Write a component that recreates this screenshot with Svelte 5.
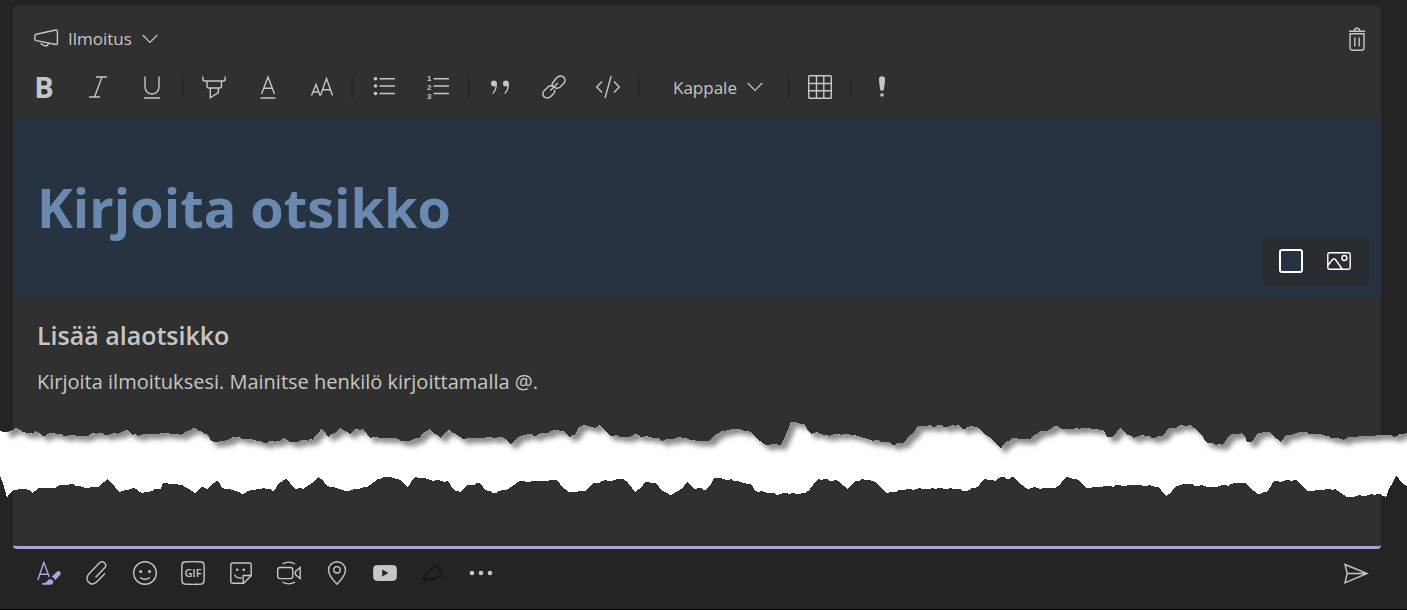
<script lang="ts">
  let postType = $state("announcement");
  let textStyle = $state("paragraph");
  let headline = $state("");
  let subhead = $state("");
  let message = $state("");

  type Point = [number, number];

  // upper and lower edge of the paper tear, left to right
  const upperEdge: Point[] = [
    [0, 431], [7, 432], [10, 431], [16, 428], [23, 432], [33, 434], [35, 431], [42, 436], [53, 433], [67, 436],
    [88, 436], [93, 433], [108, 435], [120, 433], [127, 430], [132, 435], [150, 434], [167, 433], [180, 435],
    [188, 431], [193, 428], [199, 431], [208, 435], [211, 441], [218, 442], [230, 439], [233, 437], [247, 439],
    [260, 441], [267, 443], [272, 441], [280, 441], [283, 438], [290, 442], [298, 442], [302, 440], [313, 440],
    [316, 435], [321, 429], [328, 437], [335, 433], [340, 428], [350, 435], [356, 429], [363, 429], [370, 438],
    [388, 438], [407, 441], [420, 438], [423, 433], [430, 429], [440, 438], [449, 430], [457, 435], [462, 439],
    [475, 438], [502, 437], [511, 444], [518, 437], [528, 434], [533, 436], [545, 433], [557, 430], [562, 431],
    [570, 437], [575, 435], [579, 427], [584, 425], [594, 428], [599, 425], [605, 431], [610, 436], [629, 437],
    [635, 434], [640, 437], [658, 438], [662, 441], [667, 439], [685, 438], [690, 440], [709, 441], [715, 435],
    [722, 431], [735, 429], [747, 431], [755, 437], [763, 444], [781, 445], [785, 437], [791, 422], [803, 424],
    [811, 434], [817, 432], [823, 435], [847, 434], [857, 436], [867, 439], [887, 442], [895, 445], [903, 443],
    [911, 435], [918, 426], [950, 426], [958, 425], [962, 429], [968, 427], [978, 428], [983, 433], [995, 442],
    [1001, 449], [1007, 441], [1015, 438], [1030, 440], [1040, 431], [1047, 431], [1054, 426], [1065, 429],
    [1085, 428], [1102, 430], [1107, 437], [1113, 437], [1120, 428], [1128, 435], [1133, 438], [1142, 435],
    [1152, 438], [1162, 436], [1170, 428], [1190, 425], [1197, 431], [1208, 443], [1222, 445], [1230, 435],
    [1242, 433], [1247, 442], [1253, 441], [1258, 433], [1270, 432], [1273, 436], [1280, 442], [1288, 435],
    [1303, 432], [1322, 435], [1343, 440], [1348, 437], [1363, 436], [1383, 435], [1397, 436], [1407, 433],
  ];
  const lowerEdge: Point[] = [
    [0, 476], [3, 483], [7, 498], [13, 490], [25, 489], [32, 493], [38, 488], [55, 488], [60, 485], [70, 484],
    [88, 488], [98, 487], [107, 479], [115, 487], [119, 492], [133, 488], [142, 493], [161, 489], [163, 483],
    [182, 485], [195, 493], [202, 487], [207, 489], [217, 480], [222, 488], [232, 490], [242, 494], [248, 491],
    [263, 488], [273, 491], [278, 484], [286, 479], [293, 487], [303, 489], [312, 483], [318, 477], [327, 486],
    [345, 491], [367, 487], [377, 479], [390, 477], [400, 480], [407, 487], [415, 477], [430, 480], [447, 481],
    [455, 491], [460, 492], [467, 485], [480, 483], [485, 490], [493, 493], [508, 489], [517, 482], [553, 480],
    [557, 480], [562, 487], [568, 492], [585, 491], [593, 483], [623, 479], [628, 483], [635, 492], [642, 487],
    [645, 482], [656, 483], [662, 491], [670, 495], [678, 491], [687, 482], [695, 489], [707, 489], [714, 478],
    [737, 481], [750, 484], [755, 491], [780, 494], [805, 493], [813, 485], [818, 479], [838, 481], [847, 489],
    [853, 483], [862, 479], [875, 482], [887, 493], [907, 489], [950, 488], [963, 491], [977, 487], [985, 479],
    [995, 481], [998, 478], [1015, 478], [1025, 488], [1055, 488], [1067, 477], [1078, 480], [1087, 488],
    [1110, 486], [1140, 485], [1158, 487], [1166, 496], [1177, 486], [1183, 484], [1213, 487], [1240, 483],
    [1247, 484], [1257, 494], [1267, 492], [1274, 481], [1297, 480], [1307, 491], [1335, 489], [1347, 497],
    [1380, 494], [1386, 497], [1396, 476], [1402, 483], [1407, 487],
  ];

  // break long runs into short steps so the paper looks fibrous
  function roughen(edge: Point[]): Point[] {
    const out: Point[] = [];
    for (let i = 0; i < edge.length - 1; i++) {
      const [x1, y1] = edge[i];
      const [x2, y2] = edge[i + 1];
      const steps = Math.max(1, Math.round((x2 - x1) / 3));
      out.push([x1, y1]);
      for (let s = 1; s < steps; s++) {
        const x = x1 + ((x2 - x1) * s) / steps;
        const y = y1 + ((y2 - y1) * s) / steps;
        out.push([Math.round(x), Math.round(y + (Math.sin(x * 1.7) + Math.sin(x * 0.6)) * 0.5)]);
      }
    }
    out.push(edge[edge.length - 1]);
    return out;
  }

  const upper = roughen(upperEdge);
  const lower = roughen(lowerEdge);
  const paper = [...upper, ...lower.toReversed()].join(" ");
  const shade = [[4, 400], ...upper.slice(1), [1440, 433], [1440, 400]].join(" ");
</script>

{#snippet chevron()}
  <svg class="chevron" viewBox="0 0 16 10" aria-hidden="true"><path d="M.8 1 8 8.4 15.2 1" /></svg>
{/snippet}

<main class="compose">
  <section class="panel">
    <header class="post-type">
      <label class="dropdown">
        <svg class="icon" viewBox="0 0 24 24" aria-hidden="true">
          <path d="M2.3 7.3 21.8 3q1.6-.3 1.6 1.3v11.9q0 1.6-1.6 1.3L2.3 13.6Q.8 13.2.8 12V8.9Q.8 7.7 2.3 7.3ZM7.2 14.8v1.4q0 1 1 1.4l3 1.2q2 .6 2.8-1.2l.4-1.2" />
        </svg>
        <select bind:value={postType} aria-label="Viestin tyyppi">
          <option value="announcement">Ilmoitus</option>
        </select>
        {@render chevron()}
      </label>
      <button aria-label="Poista">
        <svg class="icon" viewBox="0 0 24 24">
          <path d="M4 4.2h16M9.3 4q0-2.8 2.7-2.8T14.7 4M5 6.8h14v14q0 2.4-2.4 2.4H7.4Q5 23.2 5 20.8ZM9.8 10.5v9M14.2 10.5v9" />
        </svg>
      </button>
    </header>

    <div class="toolbar">
      <button class="bold" aria-label="Lihavointi">B</button>
      <button aria-label="Kursivointi">
        <svg class="icon" viewBox="0 0 24 24"><path d="M10 2h11M3 22h11M16 2 8.5 22" /></svg>
      </button>
      <button aria-label="Alleviivaus">
        <svg class="icon" viewBox="0 0 24 24"><path d="M5 1.5v10.5a7 7 0 0 0 14 0V1.5M4 23h16" /></svg>
      </button>
      <span class="divider"></span>
      <button aria-label="Korostus">
        <svg class="icon" viewBox="0 0 24 24">
          <path d="M.8 1.5v2.5q0 2 2 2h18.4q2 0 2-2V1.5M5 6v5q0 2 2 2h10.5q2 0 2-2V6M8.3 13v9.8l8-5.3V13" />
        </svg>
      </button>
      <button aria-label="Fontin väri">
        <svg class="icon" viewBox="0 0 24 24"><path d="M5.5 19 12 2l6.5 17M8 13.2h8M4.5 23h15" /></svg>
      </button>
      <button aria-label="Fonttikoko">
        <svg class="icon" viewBox="0 0 24 24"><path d="M1.5 20.5 6 9.5l4 11M3 17h5.5M10.5 20.5 16.5 3.5l6 17M12.7 14.8h7.8" /></svg>
      </button>
      <span class="divider"></span>
      <button aria-label="Luettelomerkit">
        <svg class="icon" viewBox="0 0 24 24">
          <path d="M7.5 3.7h15.5M7.5 11h15.5M7.5 18.5h15.5" />
          <g class="solid"><circle cx="3.5" cy="3.7" r="1.8" /><circle cx="3.5" cy="11" r="1.8" /><circle cx="3.5" cy="18.5" r="1.8" /></g>
        </svg>
      </button>
      <button aria-label="Numeroitu luettelo">
        <svg class="icon" viewBox="0 0 24 24">
          <path d="M7.5 3.7h15.5M7.5 11h15.5M7.5 18.5h15.5" />
          <g class="digits"><text x="1" y="6">1</text><text x="1" y="15">2</text><text x="1" y="24">3</text></g>
        </svg>
      </button>
      <span class="divider"></span>
      <button aria-label="Lainaus">
        <svg class="icon" viewBox="0 0 24 24">
          <path class="solid" d="M6 5.5a3 3 0 1 0 0 6q1 0 1.6-.4Q7.2 15 4.3 18.3l.8.8Q9 15 9 9 9 5.5 6 5.5ZM18 5.5a3 3 0 1 0 0 6q1 0 1.6-.4-.4 3.9-3.3 7.2l.8.8Q21 15 21 9q0-3.5-3-3.5Z" />
        </svg>
      </button>
      <button aria-label="Linkki">
        <svg class="icon" viewBox="0 0 24 24">
          <path d="M8.5 15.5 15.8 8M10 8.8l4.3-5.6Q16.5.7 19 1q4 .8 4 4.5 0 1.7-1.4 3.1l-3.7 3.7q-2.5 2-5.5-.1-2.600-1.600-2.400-3.400M12.7 14.6q.5 2.2-1 3.9l-3 3q-2 2-4.6 1.4Q1 22 .8 19q0-1.8 1.4-3.2l4-4q2.3-1.9 4.8-.3" />
        </svg>
      </button>
      <button aria-label="Koodi">
        <svg class="icon" viewBox="0 0 24 24"><path d="M6 6.5.8 12 6 17.5M18 6.5l5.2 5.5-5.2 5.5M15.2 1 9 23" /></svg>
      </button>
      <span class="divider"></span>
      <label class="dropdown text-style">
        <select bind:value={textStyle} aria-label="Tekstityyli">
          <option value="paragraph">Kappale</option>
        </select>
        {@render chevron()}
      </label>
      <span class="divider"></span>
      <button aria-label="Taulukko">
        <svg class="icon" viewBox="0 0 24 24"><path d="M1.5.7h21q.8 0 .8.8v21q0 .8-.8.8h-21q-.8 0-.8-.8v-21q0-.8.8-.8ZM.7 8.5h22.6M.7 15.8h22.6M8.5.7v22.6M15.8.7v22.6" /></svg>
      </button>
      <span class="divider"></span>
      <button aria-label="Tärkeä">
        <svg class="icon" viewBox="0 0 24 24">
          <path class="solid" d="M9 4q0-2.800 3-2.800T15 4q0 4-1.400 11.500h-3.200Q9 8 9 4Z" />
          <circle class="solid" cx="12" cy="20" r="1.8" />
        </svg>
      </button>
    </div>

    <div class="banner">
      <input class="headline" bind:value={headline} placeholder="Kirjoita otsikko" aria-label="Otsikko" />
      <div class="banner-tools">
        <button class="swatch" aria-label="Taustaväri"></button>
        <button aria-label="Taustakuva">
          <svg class="icon" viewBox="0 0 24 24">
            <path d="M2.5 3.7h19q1.7 0 1.7 1.7v13.2q0 1.7-1.7 1.7h-19q-1.7 0-1.7-1.7V5.4q0-1.7 1.7-1.7ZM1.2 16l4.6-5.7q1.2-1.3 2.4 0l7 9.7" />
            <circle cx="17.4" cy="9" r="2.5" />
          </svg>
        </button>
      </div>
    </div>

    <input class="subhead" bind:value={subhead} placeholder="Lisää alaotsikko" aria-label="Alaotsikko" />
    <textarea
      class="message"
      bind:value={message}
      placeholder="Kirjoita ilmoituksesi. Mainitse henkilö kirjoittamalla @."
      aria-label="Viesti"
    ></textarea>
  </section>

  <footer class="actions">
    <button class="active" aria-label="Muotoile">
      <svg class="icon" viewBox="0 0 24 24">
        <path d="M.8 19 6.8 1.5 12.3 16M2.8 13.2h8.5" />
        <path class="solid" d="M5 22.2q4.3 0 5.6-2.6 1.2-2 3.7-1.2 2.7 1.2 1.8 3.5-.8 1.9-3.5 1.9H5ZM14.6 15.8l5.2-5q1.8-1.4 3.3 0 1.5 1.500 0 3.200l-5 5.200q-.9-2.500-3.500-3.400Z" />
      </svg>
    </button>
    <button aria-label="Liitä">
      <svg class="icon" viewBox="0 0 24 24">
        <path d="m10.5 16.5 9-9.4q2.6-3-.1-5.4-2.7-2-5.3.6L4.3 12.5q-3.700 4-1.600 7.700 3.400 5 8.400 1.200L20 12.600" />
      </svg>
    </button>
    <button aria-label="Emoji">
      <svg class="icon" viewBox="0 0 24 24">
        <circle cx="12" cy="12" r="11.3" /><path d="M7 16.5q5 3.500 10 0" />
        <g class="solid"><circle cx="7.7" cy="10.5" r="1.5" /><circle cx="16.5" cy="10.5" r="1.5" /></g>
      </svg>
    </button>
    <button aria-label="GIF">
      <svg class="icon" viewBox="0 0 24 24">
        <path d="M3.5 1Q12 .3 20.5 1 23 1.3 23 4q.5 8 0 16 0 2.700-2.500 3-8.500.7-17 0Q1 22.700 1 20 .5 12 1 4q0-2.700 2.500-3Z" />
        <text class="gif" x="12" y="16">GIF</text>
      </svg>
    </button>
    <button aria-label="Tarra">
      <svg class="icon" viewBox="0 0 24 24">
        <path d="M3.5 2h17q1.7 0 1.7 1.7v11l-7.500 7.500H3.500q-1.700 0-1.700-1.700V3.700Q1.800 2 3.500 2ZM14.200 22v-7.500h7.500M5.500 13.500q2 4 7.200 3.500" />
        <g class="solid"><circle cx="8.2" cy="8.8" r="1.3" /><circle cx="14.8" cy="8.8" r="1.3" /></g>
      </svg>
    </button>
    <button aria-label="Kokous">
      <svg class="icon" viewBox="0 0 24 24">
        <path d="M3 6.5h10.5q2.300 0 2.300 2.300v6.500q0 2.300-2.300 2.300H3q-2.300 0-2.300-2.300V8.800Q.7 6.500 3 6.500ZM23.200 6.500v11l-4.500-3.700q-1-1.800 0-3.600ZM5.500 3q6-3.800 12.500 0M5.500 21q6 3.800 12.500 0" />
      </svg>
    </button>
    <button aria-label="Sijainti">
      <svg class="icon" viewBox="0 0 24 24">
        <path d="M12 23.2Q3.5 14.500 3.500 9a8.500 8.200 0 0 1 17 0Q20.500 14.500 12 23.200Z" /><circle cx="12" cy="8.8" r="3.2" />
      </svg>
    </button>
    <button aria-label="YouTube">
      <svg class="icon" viewBox="0 0 24 24">
        <path class="solid" fill-rule="evenodd" d="M3 4.300q9-.8 18 0 2.500.3 2.700 2.700.5 5 0 10-.2 2.400-2.700 2.700-9 .8-18 0-2.500-.3-2.700-2.700-.5-5 0-10Q.5 4.600 3 4.300ZM9.200 8.500v7l6.200-3.500Z" />
      </svg>
    </button>
    <button class="dimmed" aria-label="Kiitos">
      <svg class="icon" viewBox="0 0 24 24">
        <path d="M3 15.500 13.800 4.500q1-.8 1.600.2L21 13.500q.6 1.200-.8 1.700L4 19.500" />
        <path class="solid" d="M2 15.500q2.800-1 3.500 1.500.4 2-1.600 2.600-2.400.4-2.800-1.900 0-1.500.9-2.200ZM9 18q2.500-1.500 5.500-1.200v2q-3 1.500-5.500.5Z" />
      </svg>
    </button>
    <button aria-label="Lisää vaihtoehtoja">
      <svg class="icon" viewBox="0 0 24 24">
        <g class="solid"><circle cx="3" cy="12" r="2.3" /><circle cx="12" cy="12" r="2.3" /><circle cx="21" cy="12" r="2.3" /></g>
      </svg>
    </button>
    <button class="send" aria-label="Lähetä">
      <svg class="icon" viewBox="0 0 24 24"><path d="M1 3.500 23 12.500 1 21.800 3.200 12.500ZM3.200 12.500H22" /></svg>
    </button>
  </footer>

  <svg class="tear" viewBox="0 415 1407 90" preserveAspectRatio="none" aria-hidden="true">
    <defs>
      <clipPath id="paper"><polygon points={paper} /></clipPath>
      <filter id="soft" x="-5%" y="-50%" width="110%" height="200%"><feGaussianBlur stdDeviation="2.4" /></filter>
    </defs>
    <polygon class="paper" points={paper} />
    <g clip-path="url(#paper)">
      <polygon class="shade" points={shade} transform="translate(5 5)" filter="url(#soft)" />
    </g>
  </svg>
</main>

<style>
  :global(body) {
    margin: 0;
    background: #242424;
  }
  .compose {
    position: relative;
    padding: 6px 26px 0 13px;
    border-bottom: 1px solid #000;
    color: #c8c6c4;
    font-family: "Open Sans", "Noto Sans", sans-serif;
    font-size: 17px;
  }
  .panel {
    display: flex;
    flex-direction: column;
    background: #303030;
    border-bottom: 3px solid #a6a7dc;
    border-radius: 4px;
  }
  button,
  input,
  select,
  textarea {
    margin: 0;
    padding: 0;
    border: 0;
    background: none;
    color: inherit;
    font: inherit;
    outline: none;
  }
  button {
    display: flex;
    align-items: center;
    justify-content: center;
    cursor: pointer;
  }
  .icon {
    display: block;
    width: 24px;
    height: 24px;
    fill: none;
    stroke: currentColor;
    stroke-width: 1.4;
    overflow: visible;
  }
  .solid {
    fill: currentColor;
    stroke: none;
  }
  .chevron {
    width: 16px;
    height: 10px;
    fill: none;
    stroke: currentColor;
    stroke-width: 1.2;
  }
  .post-type {
    display: flex;
    align-items: center;
    justify-content: space-between;
    padding: 15px 12px 1px 21px;
    height: 35px;
  }
  .dropdown {
    display: flex;
    align-items: center;
    gap: 10px;
  }
  select {
    appearance: none;
    field-sizing: content;
    cursor: pointer;
  }
  .toolbar {
    display: flex;
    align-items: center;
    padding: 0 4px;
    height: 60px;
  }
  .toolbar button {
    width: 54px;
    height: 32px;
  }
  .toolbar .bold {
    padding-bottom: 2px;
    font-size: 29px;
    font-weight: 700;
  }
  .divider {
    width: 3px;
    height: 24px;
    margin: 0 3px 0 2px;
    background: #292929;
  }
  .text-style {
    padding: 0 22px 0 30px;
  }
  .digits {
    font-family: "Liberation Sans", sans-serif;
    font-size: 8px;
    font-weight: 700;
    fill: currentColor;
    stroke: none;
  }
  .gif {
    font-family: "Open Sans", sans-serif;
    font-size: 11px;
    font-weight: 600;
    text-anchor: middle;
    fill: currentColor;
    stroke: none;
  }
  .banner {
    display: flex;
    align-items: center;
    padding: 0 12px 2px 24px;
    height: 179px;
    background: #283341;
  }
  .headline {
    flex: 1;
    min-width: 0;
    font-size: 54px;
    font-weight: 700;
  }
  .headline::placeholder {
    color: #6a89b1;
    opacity: 1;
  }
  .banner-tools {
    display: flex;
    align-self: flex-end;
    gap: 24px;
    margin-bottom: 11px;
    padding: 12px 18px;
    border-radius: 4px;
    background: #292c31;
    color: #fff;
  }
  .swatch {
    box-sizing: border-box;
    width: 24px;
    height: 24px;
    border: 2px solid #fff;
    border-radius: 3px;
    background: #283341;
  }
  .subhead {
    margin: 17px 24px 0;
    font-size: 25px;
    font-weight: 600;
    line-height: 40px;
  }
  .message {
    margin: 11px 24px 0;
    height: 180px;
    font-size: 20px;
    line-height: 32px;
    resize: none;
  }
  .subhead::placeholder,
  .message::placeholder {
    color: #c8c6c4;
    opacity: 1;
  }
  .actions {
    display: flex;
    padding: 0 1px 12px 12px;
  }
  .actions button {
    width: 48px;
    height: 48px;
  }
  .actions .active {
    color: #a6a7dc;
  }
  .actions .dimmed {
    color: #161616;
  }
  .actions .send {
    margin-left: auto;
  }
  .tear {
    position: absolute;
    top: 415px;
    left: 0;
    width: 100%;
    height: 90px;
    pointer-events: none;
    shape-rendering: crispEdges;
  }
  .paper {
    fill: #fff;
  }
  .shade {
    fill: #8c8c8c;
  }
</style>
